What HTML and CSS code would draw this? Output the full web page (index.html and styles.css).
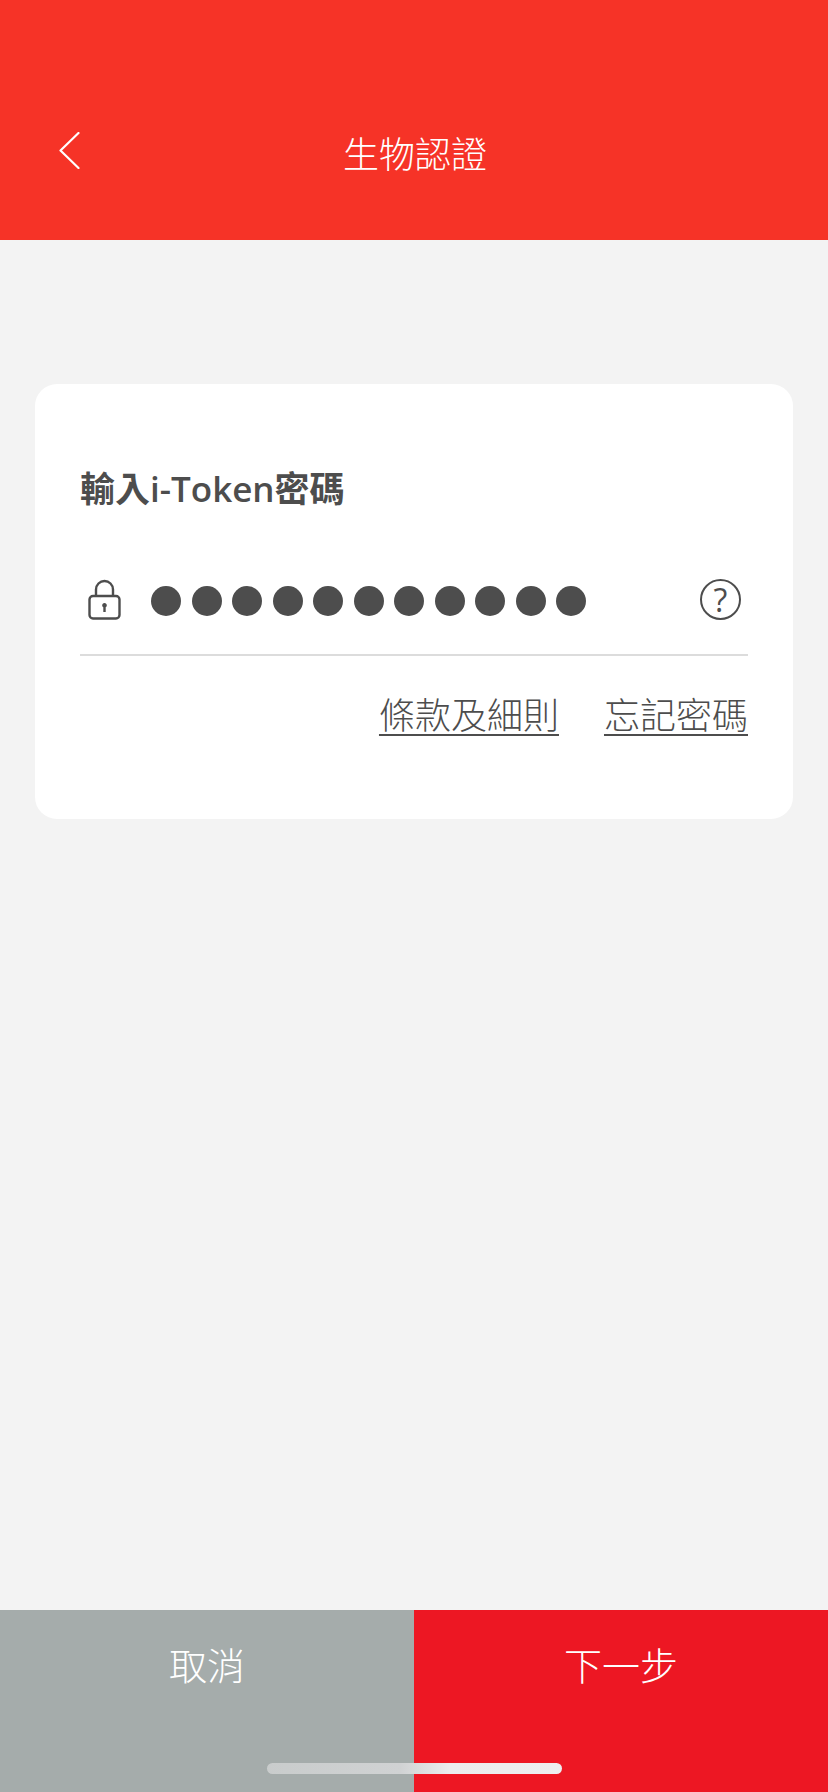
FILE: index.html
```html
<!DOCTYPE html>
<html lang="zh-Hant">
<head>
<meta charset="utf-8">
<title>生物認證</title>
<link rel="stylesheet" href="styles.css">
</head>
<body>
<div class="app">
  <header class="topbar">
    <svg class="back" width="21" height="37" viewBox="0 0 21 37" aria-hidden="true"><path d="M19.5 1 1.500 18.500 19.500 36"/></svg>
    <h1 class="topbar-title">生物認證</h1>
  </header>
  <main class="content">
    <section class="card">
      <h2 class="card-title">輸入i-Token密碼</h2>
      <div class="field">
        <svg class="lock" width="33" height="41" viewBox="0 0 33 41" aria-hidden="true">
          <path class="stroke" d="M8 17.500V10.500a8.500 8.500 0 0 1 17 0v7"/>
          <rect class="stroke" x="1.500" y="17" width="30" height="22.500" rx="3.500"/>
          <path class="keyhole" d="M16.500 24a2.300 2.300 0 0 1 1.200 4.300V33h-2.400v-4.700a2.300 2.300 0 0 1 1.200-4.300z"/>
        </svg>
        <div class="dots">
          <span class="dot"></span><span class="dot"></span><span class="dot"></span><span class="dot"></span><span class="dot"></span><span class="dot"></span><span class="dot"></span><span class="dot"></span><span class="dot"></span><span class="dot"></span><span class="dot"></span>
        </div>
        <span class="help">?</span>
      </div>
      <nav class="links">
        <a class="link" href="#">條款及細則</a>
        <a class="link" href="#">忘記密碼</a>
      </nav>
    </section>
  </main>
  <footer class="actions">
    <button class="action action-cancel">取消</button>
    <button class="action action-next">下一步</button>
    <span class="home-indicator"></span>
  </footer>
</div>
</body>
</html>
```

FILE: styles.css
```css
* { box-sizing: border-box; }
html, body { margin: 0; padding: 0; }
body {
  font-family: "Open Sans", "Noto Sans CJK TC", sans-serif;
  color: #4d4d4d;
  background: #f3f3f3;
}
.app {
  position: relative;
  display: flex;
  flex-direction: column;
  width: 828px;
  height: 1792px;
  overflow: hidden;
}
.topbar {
  position: relative;
  flex: none;
  height: 240px;
  padding: 131px 0 0 2px;
  background: #f63327;
  color: #fff;
  text-align: center;
}
.back {
  position: absolute;
  left: 59px;
  top: 132px;
}
.back path {
  fill: none;
  stroke: #fff;
  stroke-width: 2.2;
  stroke-linecap: round;
  stroke-linejoin: round;
}
.topbar-title {
  margin: 0;
  font-size: 36px;
  line-height: 48px;
  font-weight: 300;
}
.content {
  flex: 1;
  padding: 144px 35px 0;
}
.card {
  height: 435px;
  padding: 81px 45px 0;
  background: #fff;
  border-radius: 22px;
}
.card-title {
  margin: 0;
  font-size: 35px;
  line-height: 48px;
  font-weight: 600;
}
.field {
  display: flex;
  align-items: center;
  height: 78px;
  margin-top: 65px;
  padding: 0 7px 30px 8px;
  border-bottom: 2px solid #dcdcdc;
}
.lock {
  flex: none;
  margin-top: -3px;
}
.lock .stroke {
  fill: none;
  stroke: #4d4d4d;
  stroke-width: 2.4;
}
.keyhole { fill: #4d4d4d; }
.dots {
  display: flex;
  gap: 10.5px;
  margin-left: 30px;
  flex: 1;
}
.dot {
  flex: none;
  width: 30px;
  height: 30px;
  border-radius: 50%;
  background: #4d4d4d;
}
.help {
  display: flex;
  align-items: center;
  justify-content: center;
  flex: none;
  width: 41px;
  height: 41px;
  margin-top: -3px;
  border: 2px solid #4d4d4d;
  border-radius: 50%;
  font-size: 32px;
  font-weight: 500;
  line-height: 1;
}
.links {
  display: flex;
  justify-content: flex-end;
  gap: 45px;
  margin-top: 36px;
}
.link {
  font-size: 36px;
  line-height: 48px;
  font-weight: 300;
  color: #4d4d4d;
  text-decoration: underline;
  text-decoration-thickness: 2px;
  text-underline-offset: 5px;
}
.actions {
  position: relative;
  flex: none;
  display: flex;
  height: 182px;
}
.action {
  flex: 1;
  height: 100%;
  padding: 31px 0 0;
  border: 0;
  border-radius: 0;
  color: #fff;
  font: 300 38px/48px "Open Sans", "Noto Sans CJK TC", sans-serif;
  display: flex;
  justify-content: center;
  align-items: flex-start;
}
.action-cancel { background: #a5acab; }
.action-next { background: #ed1723; }
.home-indicator {
  position: absolute;
  left: 267px;
  top: 153px;
  width: 295px;
  height: 11px;
  border-radius: 6px;
  background: linear-gradient(90deg, #c9cccc 0%, #d0d2d3 45%, #ececed 62%, #eeeeef 100%);
}
```
